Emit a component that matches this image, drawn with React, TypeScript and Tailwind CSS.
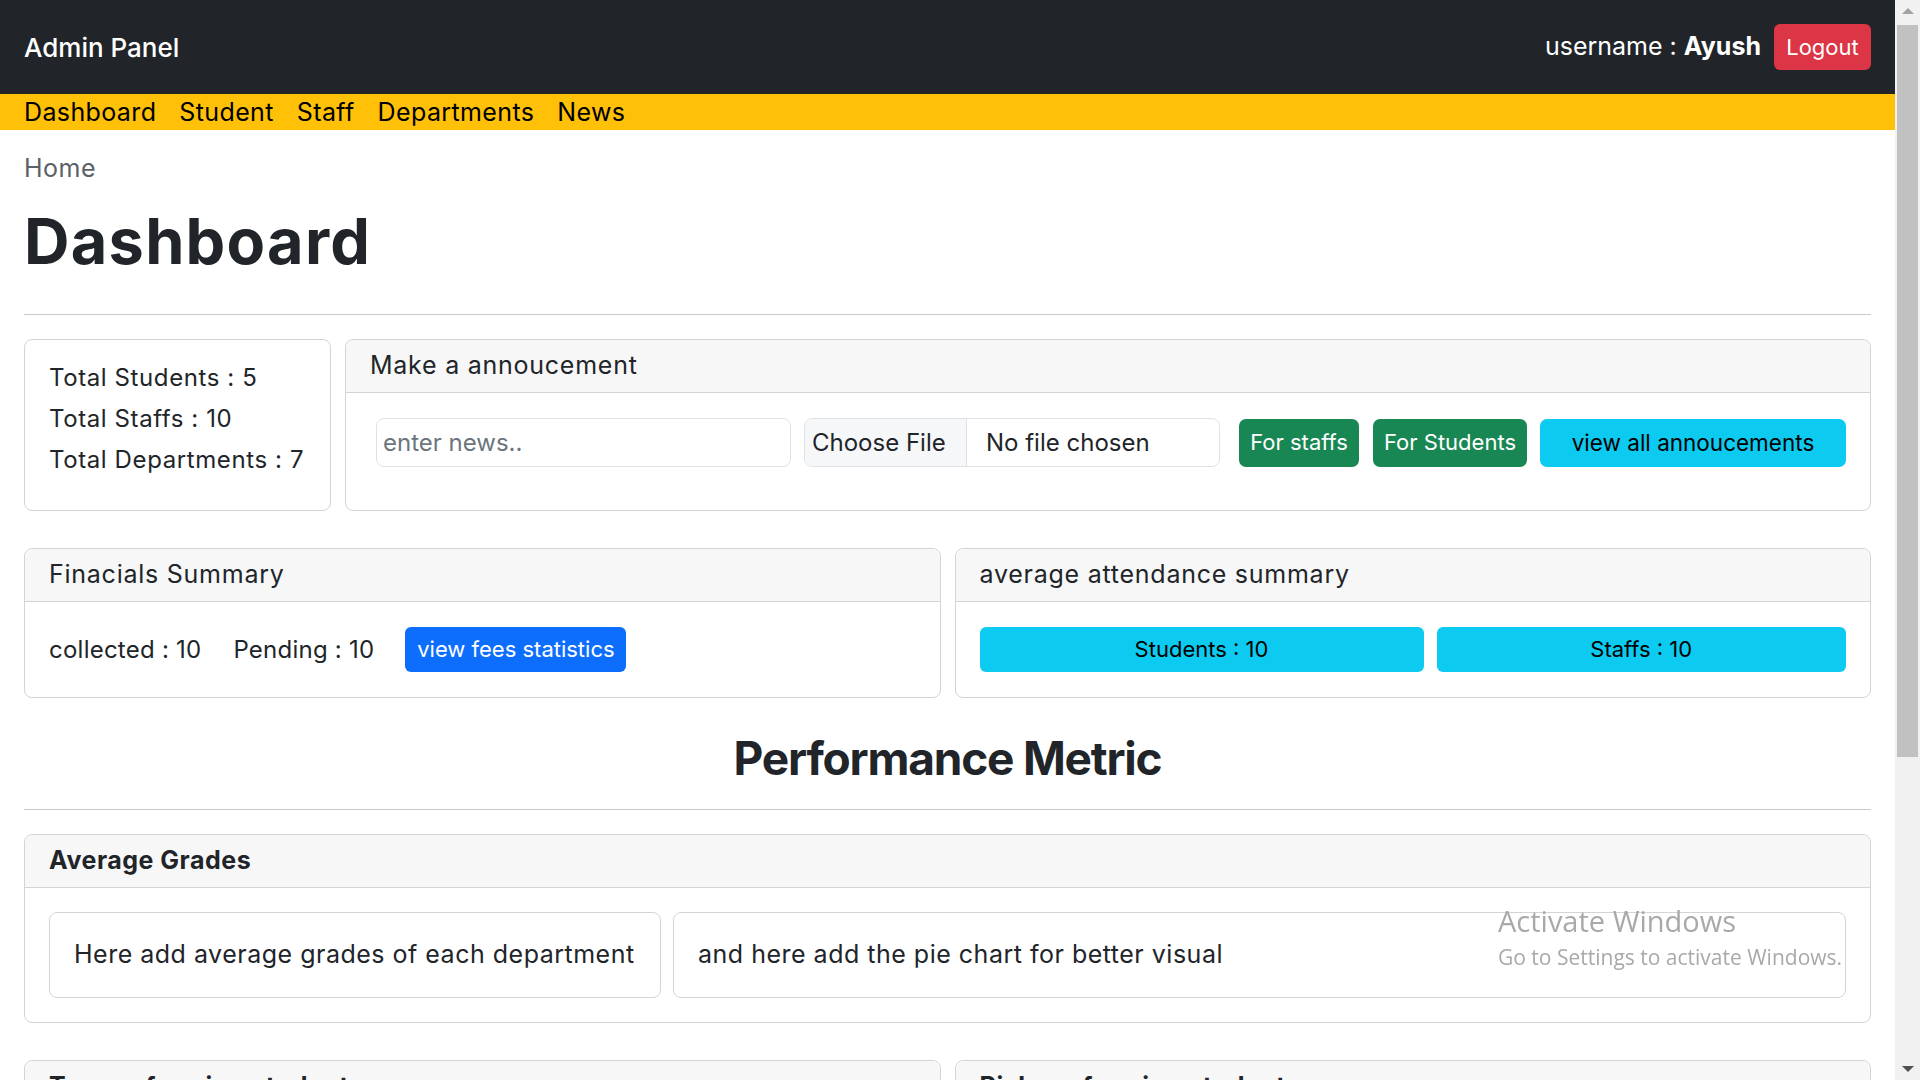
import React from 'react';

const font = "font-['Inter','Noto_Sans',sans-serif]";

const Card: React.FC<{ title: string; bold?: boolean; className?: string; children?: React.ReactNode }> = ({
  title,
  bold,
  className,
  children,
}) => (
  <div className={`border border-[#d3d4d5] rounded-[8px] overflow-hidden bg-white ${className || ''}`}>
    <div
      className={`h-[53px] flex items-center px-6 bg-[#f7f7f7] border-b border-[#d3d4d5] text-[25px] whitespace-nowrap ${
        bold ? 'font-bold tracking-[0.02em]' : 'tracking-[0.03em]'
      }`}
    >
      {title}
    </div>
    {children}
  </div>
);

const Scrollbar = () => (
  <div className="w-[25px] shrink-0 h-full bg-[#f1f1f1] flex flex-col items-center">
    <div className="h-[22px] flex items-center justify-center">
      <div className="w-0 h-0 border-l-[6px] border-r-[6px] border-b-[6px] border-l-transparent border-r-transparent border-b-[#a3a3a3]" />
    </div>
    <div className="w-[21px] h-[732px] mt-[3px] bg-[#c1c1c1]" />
    <div className="flex-1" />
    <div className="h-[22px] flex items-center justify-center">
      <div className="w-0 h-0 border-l-[6px] border-r-[6px] border-t-[6px] border-l-transparent border-r-transparent border-t-[#505050]" />
    </div>
  </div>
);

export default function App() {
  const navLinks = ['Dashboard', 'Student', 'Staff', 'Departments', 'News'];

  return (
    <div className={`h-screen w-full flex overflow-hidden bg-white text-[#212529] ${font}`}>
      <div className="flex-1 min-w-0 overflow-hidden">
        {/* top bar */}
        <header className="h-[94px] bg-[#212529] flex items-center justify-between px-6">
          <span className="text-white text-[26px] font-medium">Admin Panel</span>
          <div className="flex items-center">
            <span className="text-white text-[25px]">
              username : <b className="font-bold">Ayush</b>
            </span>
            <button className="ml-[13px] h-[46px] w-[97px] rounded-[6px] bg-[#dc3545] text-white text-[22px]">
              Logout
            </button>
          </div>
        </header>

        {/* nav */}
        <nav className="h-[36px] bg-[#ffc107] flex items-center px-6 gap-[23px]">
          {navLinks.map((l) => (
            <a key={l} className="text-[25px] tracking-[0.015em] text-black leading-[36px]">
              {l}
            </a>
          ))}
        </nav>

        <main className="px-6">
          <div className="mt-[20px] h-[36px] leading-[36px] text-[25px] tracking-[0.02em] text-[#5c6168]">Home</div>
          <h1 className="mt-[19px] h-[72px] leading-[72px] text-[63px] font-bold tracking-[0.02em]">Dashboard</h1>
          <hr className="mt-[37px] border-0 border-t border-[#c8c9ca]" />

          {/* row 1 */}
          <div className="mt-[24px] flex gap-[14px] h-[172px]">
            <div className="w-[307px] shrink-0 border border-[#d3d4d5] rounded-[8px] px-6 pt-[20px] text-[24px] tracking-[0.025em] flex flex-col gap-[5px] whitespace-nowrap">
              <span className="leading-[36px]">Total Students : 5</span>
              <span className="leading-[36px]">Total Staffs : 10</span>
              <span className="leading-[36px]">Total Departments : 7</span>
            </div>
            <Card title="Make a annoucement" className="flex-1">
              <div className="pt-[25px] pl-[30px] pr-[24px] flex items-center text-[24px]">
                <div className="w-[415px] h-[49px] border border-[#dee2e6] rounded-[8px] flex items-center px-[6px] text-[#6c757d]">
                  enter news..
                </div>
                <div className="ml-[13px] w-[416px] h-[49px] border border-[#dee2e6] rounded-[8px] flex items-center overflow-hidden">
                  <div className="w-[162px] h-full bg-[#f6f7f9] border-r border-[#dee2e6] flex items-center pl-[7px]">
                    Choose File
                  </div>
                  <span className="pl-[19px]">No file chosen</span>
                </div>
                <button className="ml-[19px] w-[120px] h-[48px] rounded-[7px] bg-[#198754] text-white text-[22px]">
                  For staffs
                </button>
                <button className="ml-[14px] w-[154px] h-[48px] rounded-[7px] bg-[#198754] text-white text-[22px]">
                  For Students
                </button>
                <button className="ml-[13px] flex-1 h-[48px] rounded-[7px] bg-[#0dcaf0] text-black text-[22.5px]">
                  view all annoucements
                </button>
              </div>
            </Card>
          </div>

          {/* row 2 */}
          <div className="mt-[37px] grid grid-cols-2 gap-[14px]">
            <Card title="Finacials Summary">
              <div className="h-[95px] px-6 flex items-center text-[24px] tracking-[0.01em]">
                <span>collected : 10</span>
                <span className="ml-[32px]">Pending : 10</span>
                <button className="ml-[31px] w-[221px] h-[45px] rounded-[6px] bg-[#0d6efd] text-white text-[22px] tracking-normal">
                  view fees statistics
                </button>
              </div>
            </Card>
            <Card title="average attendance summary">
              <div className="h-[95px] px-6 flex items-center gap-[13px] text-[22px]">
                <button className="w-[444px] h-[45px] rounded-[6px] bg-[#0dcaf0] text-black">Students : 10</button>
                <button className="flex-1 h-[45px] rounded-[6px] bg-[#0dcaf0] text-black">Staffs : 10</button>
              </div>
            </Card>
          </div>

          <h2 className="mt-[32px] h-[56px] leading-[56px] text-center text-[46px] font-bold tracking-[-1.2px]">
            Performance Metric
          </h2>
          <hr className="mt-[23px] border-0 border-t border-[#c8c9ca]" />

          <Card title="Average Grades" bold className="mt-[24px]">
            <div className="p-6 flex gap-[12px] text-[25px] tracking-[0.02em]">
              <div className="w-[612px] shrink-0 h-[86px] border border-[#d3d4d5] rounded-[8px] flex items-center px-6 whitespace-nowrap">
                Here add average grades of each department
              </div>
              <div className="flex-1 h-[86px] border border-[#d3d4d5] rounded-[8px] flex items-center px-6">
                and here add the pie chart for better visual
              </div>
            </div>
          </Card>

          <div className="mt-[37px] grid grid-cols-2 gap-[14px] pb-10">
            <Card title="Top performing students" bold>
              <div className="h-[200px]" />
            </Card>
            <Card title="Risk performing students" bold>
              <div className="h-[200px]" />
            </Card>
          </div>
        </main>
      </div>
      <Scrollbar />

      {/* OS watermark */}
      <div className="fixed left-[1498px] top-[902px] text-[#a9a9a9] font-['Open_Sans',sans-serif] pointer-events-none">
        <div className="text-[29px] leading-[38px]">Activate Windows</div>
        <div className="text-[21px] leading-[28px] mt-[3px]">Go to Settings to activate Windows.</div>
      </div>
    </div>
  );
}
